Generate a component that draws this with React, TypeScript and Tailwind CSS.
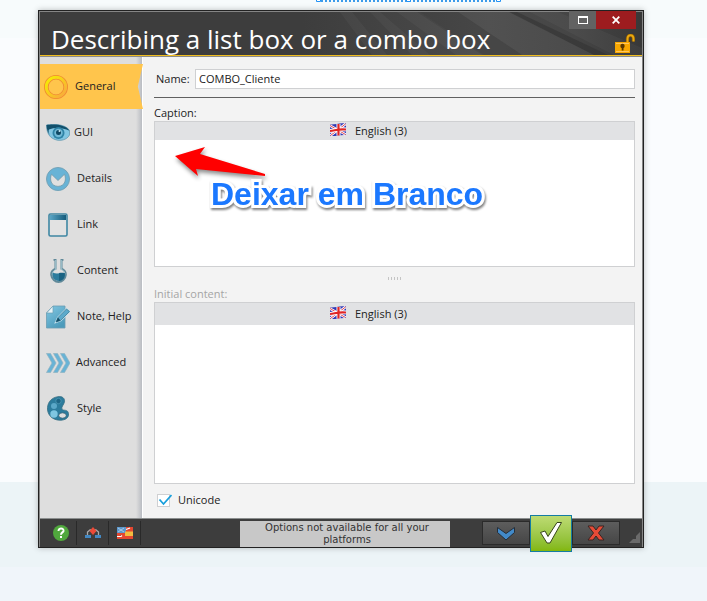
import type { ReactNode } from "react";

const blue = "#68b3d6";
const deep = "#2c7c9d";

const menu = [
  {
    label: "GUI",
    gap: "gap-1",
    icon: (
      <svg width="24" height="18" viewBox="0 0 24 18">
        <path d="M0.500 1C7-.3 20 0 23.500 6.500V11C21 16 14 17.500 9 15.500 3 13.500.5 8 .5 1Z" fill="#82c6e2" stroke="#5b93aa" strokeWidth=".7" />
        <path d="M.5 1C7-.3 20 0 23.500 6.800 17 4 10 3 3 5.500 2 7 3 10 4.500 12 2 9 .5 5 .5 1Z" fill="#12506b" />
        <circle cx="12.500" cy="9" r="6" fill="#2e83a6" />
        <circle cx="12.500" cy="9" r="4.200" fill="#72b9d6" />
        <circle cx="12.500" cy="8.500" r="2.500" fill="#0f4863" />
        <circle cx="13.500" cy="7" r="1" fill="#c7e9f5" />
      </svg>
    ),
  },
  {
    label: "Details",
    gap: "gap-[7px]",
    icon: (
      <svg width="24" height="24" viewBox="0 0 24 24">
        <circle cx="12" cy="12" r="11.500" fill={blue} stroke="#76a3b7" />
        <path d="M5.500 7.200 12 13.500 18.500 7.200C20.500 12 19.500 19 12 19.400 4.500 19 3.500 12 5.500 7.200Z" fill="#e0e0e0" stroke="#7199aa" strokeWidth=".8" />
      </svg>
    ),
  },
  {
    label: "Link",
    gap: "gap-[7px]",
    icon: (
      <svg width="24" height="24" viewBox="0 0 24 24">
        <defs>
          <linearGradient id="linkTop">
            <stop stopColor="#5aa5c5" />
            <stop offset="1" stopColor="#145b7b" />
          </linearGradient>
        </defs>
        <rect x="3" y="1" width="18" height="22" rx="1.500" fill="#e2e2e2" stroke="#3f87a3" strokeWidth="1.600" />
        <path d="M4 2h16v5H4z" fill="url(#linkTop)" />
      </svg>
    ),
  },
  {
    label: "Content",
    gap: "gap-[7px]",
    icon: (
      <svg width="24" height="24" viewBox="0 0 24 24">
        <path d="M7.500.8h2v9C6.500 11 5 13 5.200 16c.5 4 4 7 7.300 7s7-3 7.300-7c.2-3-1.300-5-4.300-6.200v-9h2" fill="none" stroke="#608999" strokeWidth="2" />
        <path d="M9.700 1v9.500C7 12 6.300 14 6.300 16M15.300 1v9.500c3 1 3.500 3 3.500 5" fill="none" stroke="#b4d3dd" strokeWidth=".8" />
        <path d="M6.700 13.500c4 2 8.500 0 12 .5 1 4-2 8-6 8s-7.500-4-6-8.500Z" fill={deep} />
        <path d="M13 14c2-.5 4-.5 5.700 0 1 4-1.700 8-5.700 8Z" fill="#1a6383" />
      </svg>
    ),
  },
  {
    label: "Note, Help",
    gap: "gap-[7px]",
    icon: (
      <svg width="24" height="24" viewBox="0 0 24 24">
        <defs>
          <linearGradient id="note" x2=".6" y2="1">
            <stop stopColor="#83c8e3" />
            <stop offset="1" stopColor="#4c9bbb" />
          </linearGradient>
        </defs>
        <path d="M7 1h12v22H.5V8Z" fill="url(#note)" stroke="#6b9db2" strokeWidth=".8" />
        <path d="M7 1v7H.5Z" fill="#e7f3f7" stroke="#6b9db2" strokeWidth=".7" />
        <path d="m20.500 4 3 2.500-9 9-4.500 1.500 2-4.500Z" fill="#5baacb" stroke="#c3e0ec" strokeWidth="2" />
        <path d="m20.500 4 3 2.500-9 9-4.500 1.500 2-4.500Z" fill="#5baacb" stroke="#3c7d98" strokeWidth=".8" />
        <path d="m10 17 2-4.500 2.500 3Z" fill="#164f68" />
      </svg>
    ),
  },
  {
    label: "Advanced",
    gap: "gap-1.5",
    icon: (
      <svg width="24" height="20" viewBox="0 0 24 20">
        <g fill={blue} stroke="#8fb3c2" strokeWidth=".7">
          <path d="M.5.500h4L10 10l-5.500 9.500h-4L6 10Z" />
          <path d="M7.500.500h4L17 10l-5.500 9.500h-4L13 10Z" />
          <path d="M14.500.500h4L24 10l-5.500 9.500h-4L20 10Z" />
        </g>
      </svg>
    ),
  },
  {
    label: "Style",
    gap: "gap-[7px]",
    icon: (
      <svg width="24" height="25" viewBox="0 0 24 25">
        <path d="M12 .7c4-.8 7 1.500 6.500 5-.5 3-3.500 5-2.500 7.500 1 2 6-.5 6.500 4.500.5 4-3 6.500-8.500 6.500C6 24.200 1 18.500 1.500 11.500 2 5.500 6 1.500 12 .7Z" fill={deep} stroke="#366d82" strokeWidth=".8" />
        <circle cx="12.500" cy="5" r="2.700" fill="#1d6585" stroke="#5aa5c0" strokeWidth=".6" />
        <circle cx="8" cy="10" r="3" fill="#5ba8c8" />
        <circle cx="8" cy="18" r="3.700" fill="#7fc6e2" />
        <ellipse cx="16.500" cy="19.500" rx="3.800" ry="2.700" fill="#dedede" stroke="#194e66" strokeWidth=".7" />
      </svg>
    ),
  },
];

function Flag() {
  return (
    <svg width="16" height="14" viewBox="0 0 16 14" className="mb-0.5 shrink-0">
      <path d="M0 1.500C5 2 9-.5 16 .5v11.500C10 11.500 6 13.500 0 13Z" fill="#3139b5" />
      <path d="m0 2.500 15.500 9M.5 12.500 15.500 1" stroke="#fff" strokeWidth="2.600" />
      <path d="m0 2.500 15.500 9M.5 12.500 15.500 1" stroke="#df3340" strokeWidth=".9" />
      <path d="M8.500 1v11.500M0 8C5 7.500 9 5.500 16 6.500" fill="none" stroke="#fff" strokeWidth="4" />
      <path d="M8.500 1v11.500M0 8C5 7.500 9 5.500 16 6.500" fill="none" stroke="#e02525" strokeWidth="2.200" />
    </svg>
  );
}

function LanguageHeader({ className }: { className: string }) {
  return (
    <div className={`flex items-center gap-[9px] bg-[#e1e2e4] pl-[175px] ${className}`}>
      <Flag />
      <span>English (3)</span>
    </div>
  );
}

function ToolButton({ label, children }: { label: string; children: ReactNode }) {
  return (
    <button aria-label={label} className="flex h-6 w-8 items-center justify-center border-r border-[#292929]">
      {children}
    </button>
  );
}

function TitleBar() {
  return (
    <header className="relative h-[43px] bg-[#3d3d3d]">
      <svg className="absolute right-0 top-0" width="340" height="43" viewBox="0 0 340 43">
        <defs>
          <linearGradient id="sheen">
            <stop stopColor="#3d3d3d" />
            <stop offset=".55" stopColor="#4b4b4b" />
            <stop offset=".8" stopColor="#454545" />
            <stop offset="1" stopColor="#383838" />
          </linearGradient>
        </defs>
        <path d="M0 0h340v43H0z" fill="url(#sheen)" />
        <g fill="#fff" opacity=".03">
          <path d="M38 0h12l35 43H70Z" />
          <path d="M68 0h10l50 43h-18Z" />
          <path d="M95 0h20l65 43h-26Z" />
          <path d="M156 0h52l84 43h-72Z" />
          <path d="m228 0 84 43h28v-7L256 0Z" />
        </g>
        <path d="m207 0 85 43h14L215 0Z" fill="#303030" opacity=".5" />
        <path d="m156 0 64 43h-38L118 0Z" fill="#303030" opacity=".15" />
      </svg>
      <h1 className="relative pl-[11px] pt-[9px] text-[26px] leading-9 whitespace-nowrap text-white">
        Describing a list box or a combo box
      </h1>
      <div className="absolute -top-px right-1.5 flex">
        <button aria-label="Maximize" className="flex h-[18px] w-[27px] items-center justify-center bg-[#626262]">
          <span className="h-2 w-2.5 border border-t-2 border-white" />
        </button>
        <button aria-label="Close" className="flex h-[18px] w-10 items-center justify-center bg-[#9d1c1f]">
          <svg width="8" height="8" viewBox="0 0 8 8">
            <path d="m.7.7 6.600 6.600m0-6.600L.7 7.300" stroke="#fff" strokeWidth="1.800" />
          </svg>
        </button>
      </div>
      <svg className="absolute bottom-px right-[7px]" width="20" height="20" viewBox="0 0 20 20">
        <path d="M12.500 8V5c0-5 6-5 6 0v2.500" fill="none" stroke="#875500" strokeWidth="3.400" />
        <path d="M12.500 8V5c0-5 6-5 6 0v2.500" fill="none" stroke="#e9a911" strokeWidth="2" />
        <path d="M0 8h15v11H0z" fill="#f7a700" />
        <path d="M1 9h13v1H1zM1 17h13v1H1z" fill="#ffc65c" />
        <circle cx="7.500" cy="12" r="2.200" fill="#5b3900" />
        <path d="M6.700 12h1.800v4.500H6.700z" fill="#5b3900" />
      </svg>
    </header>
  );
}

function Sidebar() {
  return (
    <nav className="w-[103px] shrink-0 bg-[linear-gradient(to_left,#fff_0,#fff_1px,#b9bcc2_1px,#dedede_7px)] pt-[7px]">
      <a
        href="#general"
        className="flex h-[45px] items-center gap-[7px] bg-[#ffc54c] pl-1 [clip-path:polygon(0_0,100%_0,95%_50%,100%_100%,0_100%)]"
      >
        <svg width="24" height="24" viewBox="0 0 24 24">
          <defs>
            <linearGradient id="gold" x2="1" y2="1">
              <stop stopColor="#f5f000" />
              <stop offset="1" stopColor="#f9a640" />
            </linearGradient>
          </defs>
          <circle cx="12" cy="12" r="9.700" fill="none" stroke="#ef8733" strokeWidth="4.600" />
          <circle cx="12" cy="12" r="9.700" fill="none" stroke="url(#gold)" strokeWidth="3" />
        </svg>
        General
      </a>
      {menu.map((item) => (
        <a key={item.label} href={`#${item.label}`} className={`mt-px flex h-[45px] items-center pl-1.5 ${item.gap}`}>
          {item.icon}
          {item.label}
        </a>
      ))}
    </nav>
  );
}

function Annotation() {
  return (
    <div className="pointer-events-none absolute left-5 top-6">
      <svg width="96" height="38" viewBox="0 0 96 38" className="drop-shadow-[1px_3px_2px_rgba(0,0,0,0.45)]">
        <path d="m0 10 30-9-5 7 65 20v2l-69-7 2 7Z" fill="#f00" />
      </svg>
      <p className="-mt-2 ml-9 font-['Liberation_Sans',sans-serif] text-[32px] leading-9 font-bold whitespace-nowrap text-[#1b78ff] drop-shadow-[1px_2px_1px_rgba(0,0,0,0.5)] [-webkit-text-stroke:6px_white] [paint-order:stroke_fill]">
        Deixar em Branco
      </p>
    </div>
  );
}

function Footer() {
  return (
    <footer className="flex h-[29px] items-center border-t border-[#8b8e8e] bg-[#3d3d3d]">
      <div className="flex pl-[5px]">
        <ToolButton label="Help">
          <svg width="16" height="16" viewBox="0 0 16 16">
            <circle cx="8" cy="8" r="8" fill="#50a83d" />
            <path d="M5.500 6C5.500 2.500 11 2.700 10.500 6 10.200 7.500 8 7.500 8 9.700" fill="none" stroke="#fff" strokeWidth="2" />
            <path d="M7 11h2v2H7z" fill="#fff" />
          </svg>
        </ToolButton>
        <ToolButton label="Dependencies">
          <svg width="16" height="12" viewBox="0 0 16 12">
            <path d="M2.500 9V5L5 3h6l2.500 2v4" fill="none" stroke="#aaa" strokeWidth="1.300" />
            <path d="m8 0 3.500 4L8 8 4.500 4Z" fill="#ed4a37" />
            <path d="M0 8h6v3H0zM10 8h6v3h-6z" fill="#4388c3" />
          </svg>
        </ToolButton>
        <ToolButton label="Languages">
          <svg width="16" height="12" viewBox="0 0 16 12">
            <path d="M0 0h16v12H0z" fill="#e44730" />
            <path d="M0 0h9v6H0z" fill="#5c97cb" />
            <path d="m1 1 6 4m0-4L1 5" stroke="#a8cae7" />
            <path d="M8 4.500h8V9H8z" fill="#f3bc40" />
            <path d="M0 9.500h4L5 8.500M9 2.500 13 1" stroke="#fff" strokeWidth="1.200" />
          </svg>
        </ToolButton>
      </div>
      <p className="mt-0.5 ml-auto w-[210px] bg-[#c8c8c8] pt-px pr-5 pb-px pl-6 text-center font-['DejaVu_Sans',sans-serif] text-[10px] leading-3 text-[#333]">
        Options not available for all your platforms
      </p>
      <div className="ml-8 flex items-center">
        <button aria-label="More" className="flex h-6 w-12 items-center justify-center border border-[#2b2b2b] bg-linear-to-b from-[#5d5d5d] to-[#464646]">
          <svg width="20" height="15" viewBox="0 0 20 15">
            <path d="m1.500 1.500 8.500 6 8.500-6v5L10 14 1.500 6.500Z" fill="#428ac9" stroke="#252e39" />
          </svg>
        </button>
        <button aria-label="OK" className="flex h-[37px] w-[42px] items-center justify-center border border-[#147ca2] bg-linear-to-b from-[#bddb72] to-[#82b70a]">
          <svg width="24" height="24" viewBox="0 0 24 24">
            <path d="M1.500 11.500 6 10l3 5.500L18 1.500h4.500L11 22H8Z" fill="#fff" stroke="#36451b" />
          </svg>
        </button>
        <button aria-label="Cancel" className="flex h-6 w-12 items-center justify-center border border-[#2b2b2b] bg-linear-to-b from-[#5d5d5d] to-[#464646]">
          <svg width="18" height="16" viewBox="0 0 18 16">
            <path d="M1 1h5l3 4 3-4h5l-5.500 7 5.500 7h-5l-3-4-3 4H1l5.500-7Z" fill="#e54b37" stroke="#3a2422" />
          </svg>
        </button>
      </div>
      <svg className="ml-[9px] mr-0.5 mb-1 shrink-0 self-end" width="11" height="11" viewBox="0 0 11 11">
        <path d="M11 0v11H0l4-4h3V4Z" fill="#6a6a6a" />
      </svg>
    </footer>
  );
}

export default function App() {
  return (
    <div className="relative min-h-screen bg-[linear-gradient(#f7fbfc_38px,#fafcfe_38px,#fafcfe_482px,#ecf4f7_482px,#ecf4f7_567px,#f0f5fa_567px)] pt-2.5 pr-[63px] pl-[38px] font-['Open_Sans',sans-serif] text-[11px] text-[#222]">
      <svg className="absolute left-[316px] top-0" width="186" height="2" viewBox="0 0 186 2">
        <path d="M5 1h176" stroke="#3c9bea" strokeWidth="2" strokeDasharray="2 2" />
        <path d="M.5 0v1.500h4V0M90.500 0v1.500h4V0M180.500 0v1.500h4V0" fill="#fff" stroke="#2292f5" />
      </svg>
      <div className="border border-[#222] shadow-[0_0_6px_rgba(0,0,0,0.25)]">
        <div className="border border-b-0 border-[#858585]">
          <TitleBar />
          <div className="border-t border-b border-t-[#f0bd1e] border-b-[#8b8b8b]" />
          <div className="flex">
            <Sidebar />
            <main className="min-w-0 flex-1 bg-[#f3f3f3] pt-3 pr-[7px] pb-[10px] pl-[11px]">
              <div className="flex items-center justify-between">
                <label htmlFor="name" className="w-[41px] shrink-0 pl-0.5">
                  Name:
                </label>
                <input
                  id="name"
                  defaultValue="COMBO_Cliente"
                  className="h-5 min-w-0 flex-1 border border-[#cfd0d2] bg-white px-[3px] pb-0.5"
                />
              </div>
              <hr className="mt-2 border-[#606060]" />
              <label htmlFor="caption" className="mt-[7px] block leading-4">
                Caption:
              </label>
              <div className="relative border border-[#cfd0d2] bg-white">
                <LanguageHeader className="h-[18px]" />
                <textarea id="caption" className="block h-[126px] w-full resize-none p-1 outline-none" />
                <Annotation />
              </div>
              <div className="mt-2.5 flex h-[3px] justify-center gap-0.5">
                {[0, 1, 2, 3, 4].map((n) => (
                  <span key={n} className="w-px bg-[#c4c4c4]" />
                ))}
              </div>
              <label htmlFor="initial" className="mt-[6px] block leading-4 text-[#a5a5a5]">
                Initial content:
              </label>
              <div className="border border-[#cfd0d2] bg-white">
                <LanguageHeader className="h-[22px]" />
                <textarea id="initial" className="block h-[158px] w-full resize-none p-1 outline-none" />
              </div>
              <label className="relative mt-2 flex items-center gap-2 pl-[3px] leading-4">
                <input
                  type="checkbox"
                  defaultChecked
                  className="size-[13px] appearance-none border border-[#cfd0d2] bg-white"
                />
                <svg className="absolute left-1 top-0.5" width="14" height="12" viewBox="0 0 14 12">
                  <path d="m1.500 5.500 4 4.500 8-9" fill="none" stroke="#189fdc" strokeWidth="1.800" />
                </svg>
                Unicode
              </label>
            </main>
          </div>
          <Footer />
        </div>
      </div>
    </div>
  );
}
